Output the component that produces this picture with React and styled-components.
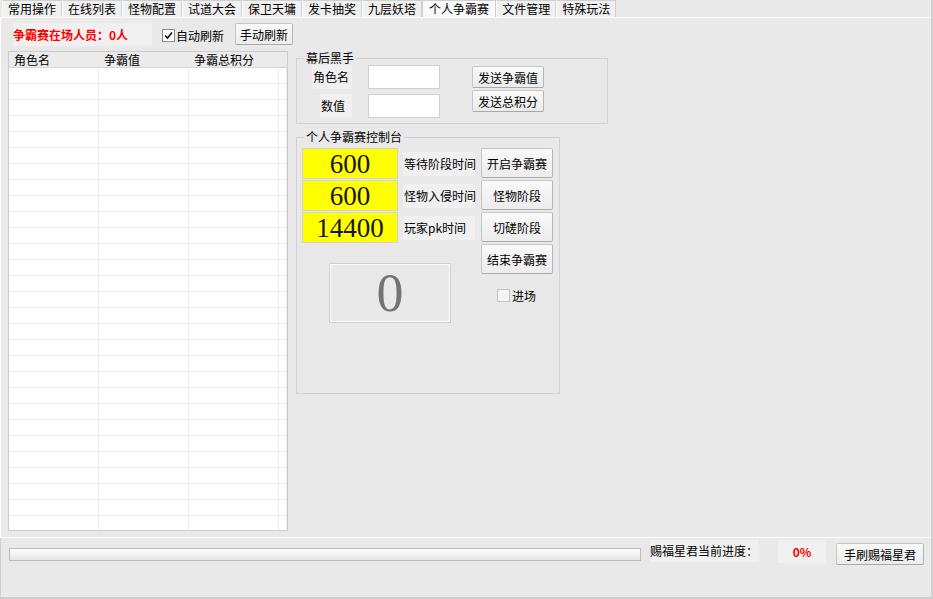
import React from "react";
import styled, { createGlobalStyle } from "styled-components";

const Global = createGlobalStyle`
  html, body {
    margin: 0;
    padding: 0;
    background: #e9e9e9;
  }
  body {
    font-family: "Noto Sans CJK SC", "Liberation Sans", sans-serif;
    font-size: 12px;
    color: #000;
  }
`;

const Root = styled.div`
  width: 933px;
  height: 599px;
  box-sizing: border-box;
  display: flex;
  flex-direction: column;
  border-right: 2px solid #cfcfcf;
  overflow: hidden;
`;

const TabStrip = styled.div`
  flex: 0 0 17px;
  display: flex;
  padding-left: 2px;
`;

const Tab = styled.div`
  height: 17px;
  box-sizing: border-box;
  padding: 0 ${p => (p.$active ? 6 : 5)}px;
  line-height: 16px;
  white-space: nowrap;
  background: ${p => (p.$active ? "#fafafa" : "#f0f0f0")};
  border: 1px solid #d0d0d0;
  border-bottom: none;
  border-left-color: ${p => (p.$active ? "#d0d0d0" : "#fdfdfd")};
`;

const Panel = styled.div`
  flex: 0 0 521px;
  box-sizing: border-box;
  display: flex;
  border-top: 1px solid #fff;
  border-left: 1px solid #fff;
  border-bottom: 1px solid #fff;
  padding-left: 7px;
`;

const LeftCol = styled.div`
  display: flex;
  flex-direction: column;
  padding-top: 5px;
  width: 280px;
  flex-shrink: 0;
`;

const TopBar = styled.div`
  display: flex;
  align-items: flex-start;
  height: 24px;
  & > * {
    flex-shrink: 0;
  }
`;

const RedLabel = styled.div`
  margin-left: 5px;
  width: 139px;
  height: 23px;
  line-height: 23px;
  background: #f0f0f0;
  color: #ff0000;
  font-weight: bold;
  white-space: nowrap;
`;

const CheckRow = styled.label`
  display: flex;
  align-items: center;
  gap: ${p => p.$gap || 2}px;
  height: 24px;
  margin-left: ${p => p.$ml || 0}px;
  margin-top: ${p => p.$mt || 0}px;
  white-space: nowrap;
`;

const Box = styled.span`
  width: 13px;
  height: 13px;
  box-sizing: border-box;
  border: 1px solid ${p => (p.$checked ? "#8a8a8a" : "#c4c4c4")};
  background: ${p => (p.$checked ? "#fff" : "#f4f4f4")};
  display: flex;
  align-items: center;
  justify-content: center;
`;

const Button = styled.div`
  width: ${p => p.$w}px;
  height: ${p => p.$h}px;
  box-sizing: border-box;
  margin-left: ${p => p.$ml || 0}px;
  margin-top: ${p => p.$mt || 0}px;
  border: 1px solid #c6c6c6;
  border-bottom-color: #a9a9a9;
  border-right-color: #b5b5b5;
  border-radius: 2px;
  background: linear-gradient(#f9f9f9, #ececec);
  display: flex;
  align-items: center;
  justify-content: center;
  white-space: nowrap;
  flex-shrink: 0;
`;

const Grid = styled.div`
  margin-top: 4px;
  width: 280px;
  height: 480px;
  box-sizing: border-box;
  border: 1px solid #cccccc;
  background: #fff;
  overflow: hidden;
`;

const GridRow = styled.div`
  display: grid;
  grid-template-columns: 90px 90px 90px 1fr;
  height: 16px;
  box-sizing: border-box;
  background: ${p => (p.$head ? "#ebebeb" : "#fff")};
  border-bottom: 1px solid ${p => (p.$head ? "#d6d6d6" : "#ececec")};
`;

const HeadCell = styled.div`
  padding-left: 5px;
  line-height: 15px;
  white-space: nowrap;
`;

const Cell = styled.div`
  border-right: 1px solid #ececec;
`;

const RightCol = styled.div`
  margin-left: 8px;
  padding-top: 33px;
  display: flex;
  flex-direction: column;
`;

const Group = styled.fieldset`
  margin: ${p => p.$mt || 0}px 0 0 0;
  padding: 0;
  width: ${p => p.$w}px;
  box-sizing: border-box;
  min-width: 0;
  border: 1px solid #d2d2d2;
`;

const Legend = styled.legend`
  margin-left: 7px;
  padding: 0 2px;
  line-height: 14px;
  font-size: 12px;
`;

const SecretBody = styled.div`
  display: flex;
  padding: 0 0 5px 15px;
`;

const Column = styled.div`
  display: flex;
  flex-direction: column;
  align-items: ${p => p.$align || "flex-start"};
  gap: ${p => p.$gap}px;
  width: ${p => (p.$w ? `${p.$w}px` : "auto")};
  margin-left: ${p => p.$ml || 0}px;
  padding-top: ${p => p.$pt || 0}px;
`;

const FieldLabel = styled.div`
  width: ${p => p.$w}px;
  height: 24px;
  line-height: 24px;
  box-sizing: border-box;
  padding-left: 1px;
  background: #f0f0f0;
  white-space: nowrap;
`;

const TextBox = styled.div`
  width: 72px;
  height: 24px;
  box-sizing: border-box;
  border: 1px solid #d0d0d0;
  background: #fff;
`;

const ConsoleBody = styled.div`
  display: flex;
  height: 249px;
  box-sizing: border-box;
  padding: 4px 0 0 5px;
`;

const LeftPart = styled.div`
  display: flex;
  flex-direction: column;
`;

const TimerRow = styled.div`
  display: flex;
  align-items: center;
  height: 31px;
  margin-bottom: 1px;
`;

const Yellow = styled.div`
  width: 96px;
  height: 31px;
  box-sizing: border-box;
  border: 1px solid #d2d2d2;
  background: #ffff00;
  color: #151515;
  font-family: "Liberation Serif", serif;
  font-size: 27px;
  line-height: 30px;
  text-align: center;
`;

const TimerLabel = styled.div`
  margin-left: 5px;
  width: 72px;
  height: 24px;
  line-height: 24px;
  padding-left: 1px;
  box-sizing: border-box;
  background: #f0f0f0;
  white-space: nowrap;
`;

const ZeroBox = styled.div`
  margin: 19px 0 0 27px;
  width: 122px;
  height: 60px;
  box-sizing: border-box;
  border: 1px solid #d0d0d0;
  box-shadow: inset 0 0 0 1px #fbfbfb;
  color: #747474;
  font-family: "Liberation Serif", serif;
  font-size: 54px;
  line-height: 58px;
  text-align: center;
`;

const BottomBar = styled.div`
  flex: 1;
  box-sizing: border-box;
  display: flex;
  align-items: flex-start;
  padding-left: 8px;
  border-left: 1px solid #d0d0d0;
  border-bottom: 2px solid #cdcdcd;
`;

const Progress = styled.div`
  margin-top: 10px;
  width: 632px;
  height: 13px;
  box-sizing: border-box;
  border: 1px solid #bdbdbd;
  background: linear-gradient(#fefefe, #e6e6e6);
`;

const InfoLabel = styled.div`
  margin: 2px 0 0 9px;
  width: 109px;
  height: 22px;
  line-height: 22px;
  background: #f0f0f0;
  white-space: nowrap;
`;

const Percent = styled.div`
  margin: 2px 0 0 19px;
  width: 48px;
  height: 23px;
  line-height: 23px;
  background: #f0f0f0;
  color: #ff0000;
  font-weight: bold;
  text-align: center;
`;

const Check = () => (
  <svg width="9" height="9" viewBox="0 0 9 9">
    <path d="M1 4.5 L3.5 7 L8 1.5" fill="none" stroke="#111" strokeWidth="1.6" />
  </svg>
);

const tabs = ["常用操作", "在线列表", "怪物配置", "试道大会", "保卫天墉", "发卡抽奖", "九层妖塔", "个人争霸赛", "文件管理", "特殊玩法"];

const timers = [
  { value: "600", label: "等待阶段时间" },
  { value: "600", label: "怪物入侵时间" },
  { value: "14400", label: "玩家pk时间" },
];

const App = () => {
  const rows = Array.from({ length: 30 }, (_, i) => i);
  return (
    <Root>
      <Global />
      <TabStrip>
        {tabs.map(t => (
          <Tab key={t} $active={t === "个人争霸赛"}>{t}</Tab>
        ))}
      </TabStrip>
      <Panel>
        <LeftCol>
          <TopBar>
            <RedLabel>争霸赛在场人员：0人</RedLabel>
            <CheckRow $ml={10} $gap={1}>
              <Box $checked><Check /></Box>
              自动刷新
            </CheckRow>
            <Button $w={58} $h={22} $ml={11}>手动刷新</Button>
          </TopBar>
          <Grid>
            <GridRow $head>
              <HeadCell>角色名</HeadCell>
              <HeadCell>争霸值</HeadCell>
              <HeadCell>争霸总积分</HeadCell>
              <HeadCell />
            </GridRow>
            {rows.map(r => (
              <GridRow key={r}>
                <Cell />
                <Cell />
                <Cell />
                <Cell />
              </GridRow>
            ))}
          </Grid>
        </LeftCol>
        <RightCol>
          <Group $w={312}>
            <Legend>幕后黑手</Legend>
            <SecretBody>
              <Column $gap={5} $w={40} $align="flex-end">
                <FieldLabel $w={40}>角色名</FieldLabel>
                <FieldLabel $w={32}>数值</FieldLabel>
              </Column>
              <Column $gap={5} $ml={16}>
                <TextBox />
                <TextBox />
              </Column>
              <Column $gap={2} $ml={32} $pt={1}>
                <Button $w={72} $h={22}>发送争霸值</Button>
                <Button $w={72} $h={22}>发送总积分</Button>
              </Column>
            </SecretBody>
          </Group>
          <Group $w={264} $mt={6}>
            <Legend>个人争霸赛控制台</Legend>
            <ConsoleBody>
              <LeftPart>
                {timers.map((t, i) => (
                  <TimerRow key={i}>
                    <Yellow>{t.value}</Yellow>
                    <TimerLabel>{t.label}</TimerLabel>
                  </TimerRow>
                ))}
                <ZeroBox>0</ZeroBox>
              </LeftPart>
              <Column $gap={2} $ml={6}>
                <Button $w={72} $h={30}>开启争霸赛</Button>
                <Button $w={72} $h={30}>怪物阶段</Button>
                <Button $w={72} $h={30}>切磋阶段</Button>
                <Button $w={72} $h={30}>结束争霸赛</Button>
                <CheckRow $ml={16} $mt={7}>
                  <Box />
                  进场
                </CheckRow>
              </Column>
            </ConsoleBody>
          </Group>
        </RightCol>
      </Panel>
      <BottomBar>
        <Progress />
        <InfoLabel>赐福星君当前进度：</InfoLabel>
        <Percent>0%</Percent>
        <Button $w={88} $h={22} $ml={10} $mt={5}>手刷赐福星君</Button>
      </BottomBar>
    </Root>
  );
};

export default App;
